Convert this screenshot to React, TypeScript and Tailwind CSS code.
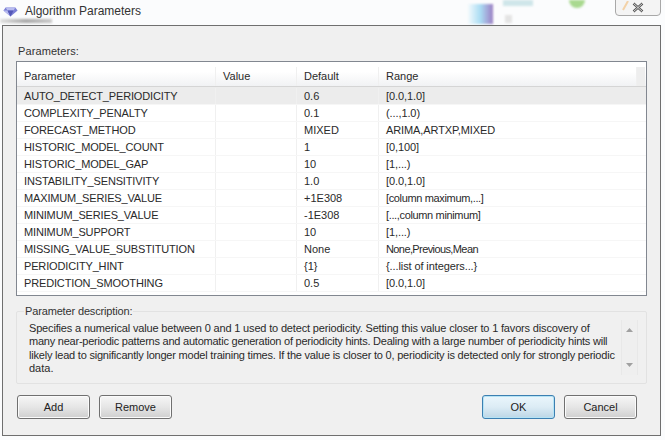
const rows = [
  ["AUTO_DETECT_PERIODICITY", "0.6", "[0.0,1.0]", "tracking-[-0.100px]"],
  ["COMPLEXITY_PENALTY", "0.1", "(...,1.0)", "tracking-[-0.100px]"],
  ["FORECAST_METHOD", "MIXED", "ARIMA,ARTXP,MIXED", "tracking-[-0.100px]"],
  ["HISTORIC_MODEL_COUNT", "1", "[0,100]", "tracking-[-0.100px]"],
  ["HISTORIC_MODEL_GAP", "10", "[1,...)", "tracking-[-0.100px]"],
  ["INSTABILITY_SENSITIVITY", "1.0", "[0.0,1.0]", "tracking-[-0.100px]"],
  ["MAXIMUM_SERIES_VALUE", "+1E308", "[column maximum,...]", "tracking-[-0.350px]"],
  ["MINIMUM_SERIES_VALUE", "-1E308", "[...,column minimum]", "tracking-[-0.350px]"],
  ["MINIMUM_SUPPORT", "10", "[1,...)", "tracking-[-0.100px]"],
  ["MISSING_VALUE_SUBSTITUTION", "None", "None,Previous,Mean", "tracking-[-0.600px]"],
  ["PERIODICITY_HINT", "{1}", "{...list of integers...}", "tracking-[-0.100px]"],
  ["PREDICTION_SMOOTHING", "0.5", "[0.0,1.0]", "tracking-[-0.100px]"],
];

function Btn({ label, primary }: { label: string; primary?: boolean }) {
  return (
    <button
      className={
        "w-[73px] h-[24px] rounded-[3px] border text-[11px] text-[#222] bg-gradient-to-b " +
        (primary
          ? "border-[#3c7fb1] from-[#eaf6fc] via-[#dcecf5] to-[#bcd6e6] shadow-[inset_0_0_0_1px_#b5e3f5]"
          : "border-[#707070] from-[#f6f6f6] via-[#e6e6e6] to-[#cfcfcf] shadow-[inset_0_0_0_1px_#fbfbfb]")
      }
    >
      {label}
    </button>
  );
}

function Cell({ w, children, last }: { w: string; children?: React.ReactNode; last?: boolean }) {
  return (
    <div className={w + " shrink-0 h-full pl-[7px] leading-[17px] whitespace-nowrap " + (last ? "" : "border-r border-[#f0f0f0]")}>
      {children}
    </div>
  );
}

export default function App() {
  return (
    <div className="relative w-[665px] h-[440px] overflow-hidden bg-[#fbfcfd] text-[#2a2a2a] text-[11px] font-['Liberation_Sans',sans-serif]">
      {/* desktop residue behind the title bar */}
      <div className="absolute left-[468px] top-[4px] w-[25px] h-[20px] bg-gradient-to-r from-[#f4fafd] via-[#a9dcf3] to-[#9a7fc4] blur-[1px]" />
      <div className="absolute left-[503px] top-0 w-[30px] h-[6px] bg-[#cfe6ea] blur-[1px]" />
      <div className="absolute left-[505px] top-[15px] w-[7px] h-[8px] bg-[#e4e4e4] blur-[1px]" />
      <div className="absolute left-[569px] top-0 w-[16px] h-[8px] rounded-b-full bg-[#a9d98f] blur-[1px]" />
      <div className="absolute left-0 top-[19px] w-[52px] h-[4px] bg-gradient-to-r from-[#e0e0e0] via-[#a8a8a8] to-[#c8c8c8] blur-[1px]" />

      <div className="flex items-center h-[25px] pl-[3px] relative">
        <svg width="15" height="10" viewBox="0 0 17 13" className="mr-[7px] mt-[-1px]" preserveAspectRatio="none">
          <path d="M3 0.500h11l2.500 4L8.500 12.500 0.500 4.500z" fill="#7b7fd6" />
          <path d="M3 0.500h11l-2 4h-7zM0.500 4.500h4.500l3.500 8z" fill="#b8bcef" />
          <path d="M5 4.500h7l-3.500 8z" fill="#5458b8" />
        </svg>
        <span className="text-[12px] text-[#333] mt-[-3px]">Algorithm Parameters</span>
        <div className="absolute right-[4px] top-[-2px] w-[46px] h-[18px] rounded-b-[4px] border border-[#a8a8a8] bg-[#f4f4f4] flex items-center justify-center">
          <svg width="12" height="11" viewBox="0 0 12 11">
            <path d="M1.500 1.500l9 8M10.500 1.500l-9 8" stroke="#555" strokeWidth="2.400" />
            <path d="M1.500 1.500l9 8M10.500 1.500l-9 8" stroke="#f4f4f4" strokeWidth="0.800" />
          </svg>
          <svg width="7" height="10" viewBox="0 0 7 10" className="absolute left-[6px] top-[2px]">
            <path d="M6 0L1 9" stroke="#f3d2a8" strokeWidth="2" />
          </svg>
        </div>
      </div>

      <div className="ml-[2px] mr-[4px] h-[411px] border border-[#6f6f6f] bg-[#f0f0f0] flex flex-col pl-[13px] pr-[13px] relative">
        <div className="mt-[17px] h-[16px] leading-[16px] text-[#333] pl-[2px] tracking-[0.100px]">Parameters:</div>
        <div className="h-[235px] mt-[2px] border border-[#828790] bg-white flex flex-col overflow-hidden">
          <div className="h-[25px] flex shrink-0 border-b border-[#d5d5d5] bg-gradient-to-b from-white from-40% to-[#f1f2f4] pt-[5px]">
            <Cell w="w-[199px]"><span className="relative top-[1px]">Parameter</span></Cell>
            <Cell w="w-[81px]"><span className="relative top-[1px]">Value</span></Cell>
            <Cell w="w-[82px]"><span className="relative top-[1px]">Default</span></Cell>
            <Cell w="w-[258px]"><span className="relative top-[1px]">Range</span></Cell>
            <div className="w-[8px] bg-[#eeeeee]" />
          </div>
          {rows.map((r, i) => (
            <div key={r[0]} className={"flex shrink-0 border-b border-[#f6f6f6] " + (i === 0 ? "h-[18px] bg-[#ececec] pt-[1px]" : "h-[17px]")}>
              <Cell w="w-[199px]"><span className="tracking-[-0.150px]">{r[0]}</span></Cell>
              <Cell w="w-[81px]" />
              <Cell w="w-[82px]">{r[1]}</Cell>
              <Cell w="w-[258px]" last><span className={r[3]}>{r[2]}</span></Cell>
            </div>
          ))}
        </div>

        <div className="relative mt-[15px] h-[73px] border border-[#e2e2e2] rounded-[2px] flex">
          <div className="absolute left-[7px] top-[-9px] bg-[#f0f0f0] px-px leading-[16px] text-[#333] tracking-[-0.150px]">Parameter description:</div>
          <div className="w-[604px] shrink-0 pl-[12px] pt-[10px] leading-[13.300px] whitespace-nowrap">
            <div className="tracking-[-0.165px]">Specifies a numerical value between 0 and 1 used to detect periodicity. Setting this value closer to 1 favors discovery of</div>
            <div className="tracking-[-0.230px]">many near-periodic patterns and automatic generation of periodicity hints. Dealing with a large number of periodicity hints will</div>
            <div className="tracking-[-0.210px]">likely lead to significantly longer model training times. If the value is closer to 0, periodicity is detected only for strongly periodic</div>
            <div>data.</div>
          </div>
          <div className="w-[17px] my-[8px] flex flex-col justify-between items-center py-[8px] bg-[#efefef] border-x border-[#e8e8e8]">
            <svg width="7" height="4" viewBox="0 0 7 4"><path d="M3.500 0L7 4H0z" fill="#a0a0a0" /></svg>
            <svg width="7" height="4" viewBox="0 0 7 4"><path d="M3.500 4L7 0H0z" fill="#a0a0a0" /></svg>
          </div>
        </div>

        <div className="flex mt-[11px] pl-[1px] pr-[10px]">
          <div className="flex gap-[9px]"><Btn label="Add" /><Btn label="Remove" /></div>
          <div className="flex gap-[9px] ml-auto"><Btn label="OK" primary /><Btn label="Cancel" /></div>
        </div>
      </div>
    </div>
  );
}
